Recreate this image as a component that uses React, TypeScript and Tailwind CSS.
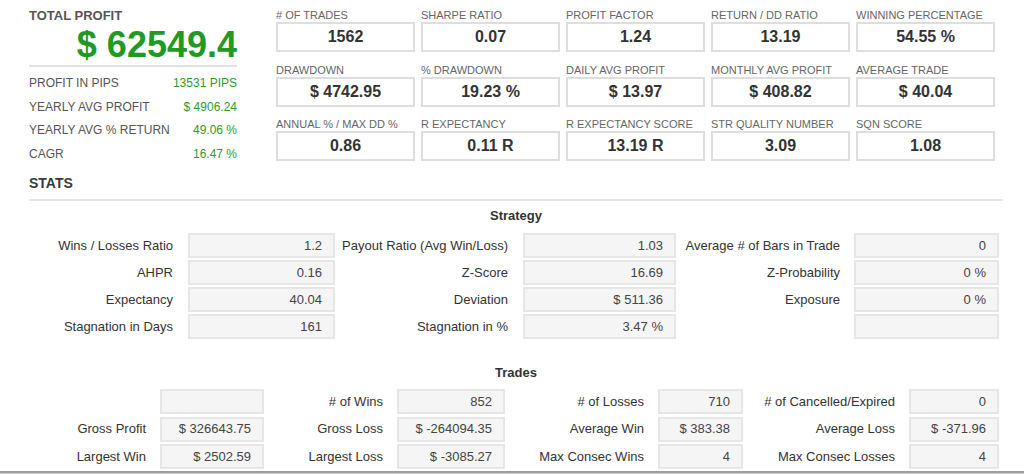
import React from "react";

const top = [
  ["# OF TRADES", "1562"],
  ["SHARPE RATIO", "0.07"],
  ["PROFIT FACTOR", "1.24"],
  ["RETURN / DD RATIO", "13.19"],
  ["WINNING PERCENTAGE", "54.55 %"],
  ["DRAWDOWN", "$ 4742.95"],
  ["% DRAWDOWN", "19.23 %"],
  ["DAILY AVG PROFIT", "$ 13.97"],
  ["MONTHLY AVG PROFIT", "$ 408.82"],
  ["AVERAGE TRADE", "$ 40.04"],
  ["ANNUAL % / MAX DD %", "0.86"],
  ["R EXPECTANCY", "0.11 R"],
  ["R EXPECTANCY SCORE", "13.19 R"],
  ["STR QUALITY NUMBER", "3.09"],
  ["SQN SCORE", "1.08"],
];

const left = [
  ["PROFIT IN PIPS", "13531 PIPS"],
  ["YEARLY AVG PROFIT", "$ 4906.24"],
  ["YEARLY AVG % RETURN", "49.06 %"],
  ["CAGR", "16.47 %"],
];

const strategy: string[][] = [
  ["Wins / Losses Ratio", "1.2", "Payout Ratio (Avg Win/Loss)", "1.03", "Average # of Bars in Trade", "0"],
  ["AHPR", "0.16", "Z-Score", "16.69", "Z-Probability", "0 %"],
  ["Expectancy", "40.04", "Deviation", "$ 511.36", "Exposure", "0 %"],
  ["Stagnation in Days", "161", "Stagnation in %", "3.47 %", "", ""],
];

const trades: string[][] = [
  ["", "", "# of Wins", "852", "# of Losses", "710", "# of Cancelled/Expired", "0"],
  ["Gross Profit", "$ 326643.75", "Gross Loss", "$ -264094.35", "Average Win", "$ 383.38", "Average Loss", "$ -371.96"],
  ["Largest Win", "$ 2502.59", "Largest Loss", "$ -3085.27", "Max Consec Wins", "4", "Max Consec Losses", "4"],
  ["", "", "", "", "", "", "", ""],
];

function Box({ v }: { v: string }) {
  return (
    <div className="h-[25px] mt-[1px] bg-[#f5f5f5] border-2 border-[#e6e6e6] flex items-center justify-end pr-[11px] text-[13px] text-[#444]">
      {v}
    </div>
  );
}

function Label({ t, pr }: { t: string; pr: string }) {
  return (
    <div className={`h-[27px] flex items-center justify-end text-[13px] text-[#333] whitespace-nowrap ${pr}`}>{t}</div>
  );
}

export default function App() {
  return (
    <div className="w-[1024px] h-[474px] overflow-hidden bg-white flex flex-col" style={{ fontFamily: '"Liberation Sans", Arial, sans-serif' }}>
      <div className="h-[471px] overflow-hidden">
        {/* top */}
        <div className="flex h-[166px]">
          <div className="w-[276px] pl-[29px]">
            <div className="w-[208px]">
              <div className="mt-[9px] h-[14px] leading-[14px] text-[13px] font-bold text-[#555]">TOTAL PROFIT</div>
              <div className="mt-[3px] h-[38px] leading-[38px] text-[36px] font-bold text-[#229922] text-right">$ 62549.4</div>
              <div className="mt-[1px] border-b-2 border-[#e3e3e3]" />
              <div className="mt-[4px]">
                {left.map(([l, v]) => (
                  <div key={l} className="h-[23.7px] flex items-center justify-between text-[12px]">
                    <span className="text-[#555]">{l}</span>
                    <span className="text-[#2e9a2e]">{v}</span>
                  </div>
                ))}
              </div>
            </div>
          </div>
          <div className="grid grid-cols-[139px_139px_139px_139px_139px] gap-x-[6px] gap-y-[10.5px] pt-[8px] content-start">
            {top.map(([l, v]) => (
              <div key={l}>
                <div className="h-[14px] leading-[14px] text-[11px] text-[#666] whitespace-nowrap">{l}</div>
                <div className="h-[30px] border-2 border-[#dedede] flex items-center justify-center text-[16px] font-bold text-[#333]">{v}</div>
              </div>
            ))}
          </div>
        </div>

        {/* stats */}
        <div className="ml-[29px] w-[974px]">
          <div className="mt-[9px] h-[16px] leading-[16px] text-[14px] font-bold text-[#3a3a3a]">STATS</div>
          <div className="mt-[8px] border-b-2 border-[#e6e6e6]" />
        </div>

        <div className="mt-[7px] h-[16px] leading-[16px] text-center text-[13px] font-bold text-[#333] pl-[8px]">Strategy</div>
        <div className="mt-[8px] grid grid-cols-[188px_147px_188px_153px_178px_145px]">
          {strategy.map((row, i) => (
            <React.Fragment key={i}>
              <Label t={row[0]} pr="pr-[15px]" />
              <Box v={row[1]} />
              <Label t={row[2]} pr="pr-[15px]" />
              <Box v={row[3]} />
              <Label t={row[4]} pr="pr-[14px]" />
              <Box v={row[5]} />
            </React.Fragment>
          ))}
        </div>

        <div className="mt-[25px] h-[16px] leading-[16px] text-center text-[13px] font-bold text-[#333] pl-[8px]">Trades</div>
        <div className="mt-[7px] grid grid-cols-[160px_104px_133px_108px_153px_85px_166px_90px] auto-rows-[27.5px]">
          {trades.map((row, i) => (
            <React.Fragment key={i}>
              {row.map((c, j) =>
                j % 2 === 0 ? (
                  <Label key={j} t={c} pr="pr-[14px]" />
                ) : (
                  <Box key={j} v={c} />
                )
              )}
            </React.Fragment>
          ))}
        </div>
      </div>
      <div className="h-[2px] bg-[#9c9c9c]" />
      <div className="h-[1px] bg-[#d4d4d4]" />
    </div>
  );
}
